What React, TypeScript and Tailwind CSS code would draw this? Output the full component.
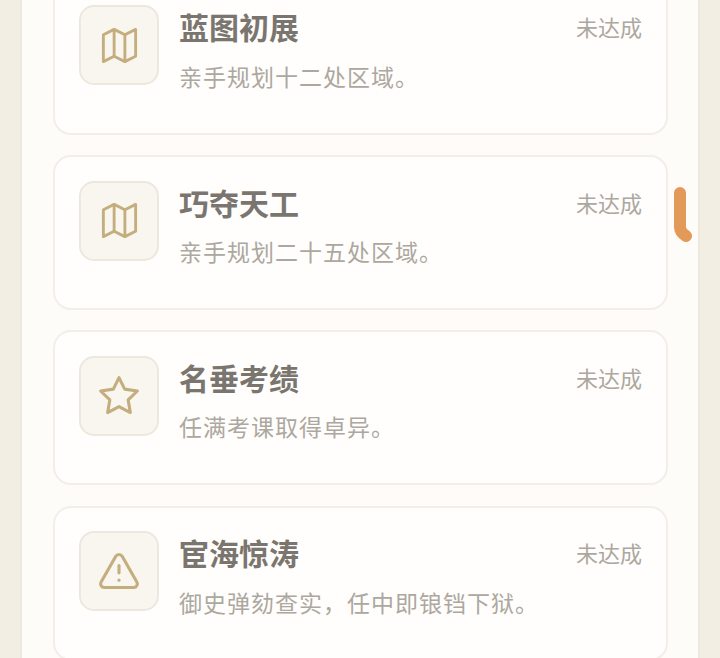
import { AlertTriangle } from "lucide-react";
import type { ReactNode } from "react";

type Achievement = { title: string; desc: string; icon: ReactNode };

const iconClass = "text-[#c5ae7e]";

function MapIcon() {
  return (
    <svg width="43" height="43" viewBox="0 0 24 24" fill="none" stroke="currentColor" strokeWidth="1.6" strokeLinejoin="round" strokeLinecap="round" className={iconClass}>
      <polygon points="3 6 9 3 15 6 21 3 21 18 15 21 9 18 3 21" />
      <line x1="9" y1="3" x2="9" y2="18" />
      <line x1="15" y1="6" x2="15" y2="21" />
    </svg>
  );
}

function StarIcon() {
  return (
    <svg width="44" height="44" viewBox="0 0 24 24" fill="none" stroke="currentColor" strokeWidth="1.7" strokeLinejoin="round" strokeLinecap="round" className={iconClass}>
      <polygon points="12 2 15.09 8.26 22 9.27 17 14.14 18.18 21.02 12 17.77 5.82 21.02 7 14.14 2 9.27 8.91 8.26 12 2" />
    </svg>
  );
}

const achievements: Achievement[] = [
  { title: "蓝图初展", desc: "亲手规划十二处区域。", icon: <MapIcon /> },
  { title: "巧夺天工", desc: "亲手规划二十五处区域。", icon: <MapIcon /> },
  { title: "名垂考绩", desc: "任满考课取得卓异。", icon: <StarIcon /> },
  { title: "宦海惊涛", desc: "御史弹劾查实\uFF0C任中即锒铛下狱。", icon: <AlertTriangle size={44} strokeWidth={1.7} className={iconClass} /> },
];

function AchievementCard({ title, desc, icon }: Achievement) {
  return (
    <div className="flex h-[155px] shrink-0 gap-[20px] rounded-[18px] border-2 border-[#f2efe9] bg-[#fffefc] pl-[24px] pr-[24px] pt-[23.5px]">
      <div className="flex h-[80px] w-[80px] shrink-0 items-center justify-center rounded-[15px] border-2 border-[#ece8df] bg-[#f9f6f0]">
        {icon}
      </div>
      <div className="min-w-0 flex-1">
        <div className="-mt-px flex items-center justify-between">
          <span className="text-[30px] leading-[44px] font-bold text-[#7a766f]">{title}</span>
          <span className="text-[22px] leading-[44px] text-[#aca89f]">未达成</span>
        </div>
        <p className="mt-[9.5px] text-[23px] leading-[36px] tracking-[1px] text-[#aca89f]">{desc}</p>
      </div>
    </div>
  );
}

export default function App() {
  return (
    <div
      className="h-[658px] w-[720px] overflow-hidden bg-[#f3eee3] px-[20px]"
      style={{ fontFamily: '"Noto Sans CJK SC", "Liberation Sans", sans-serif' }}
    >
      <div className="relative h-full overflow-hidden border-x-2 border-[#ece8dc] bg-[#fdfcf8] pl-[31px] pr-[30px]">
        <div className="-mt-[20.25px] flex flex-col gap-[20.3px]">
          {achievements.map((a) => (
            <AchievementCard key={a.title} {...a} />
          ))}
        </div>
        {/* scroll thumb */}
        <svg className="absolute left-[649px] top-[185px]" width="22" height="60" viewBox="0 0 22 60" fill="none">
          <path d="M9 8 V42 Q9 47 15 51" stroke="#e39a59" strokeWidth="12" strokeLinecap="round" strokeLinejoin="round" />
        </svg>
      </div>
    </div>
  );
}
